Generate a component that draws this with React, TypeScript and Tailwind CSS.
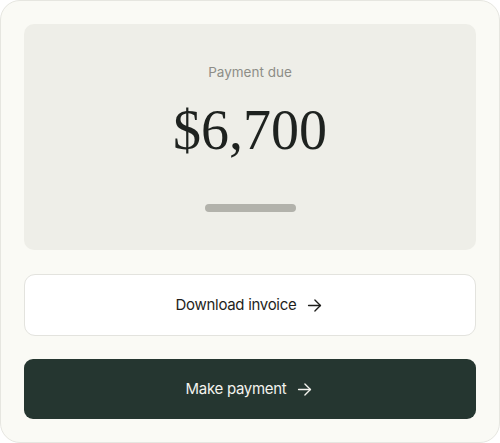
import React from "react";

const Arrow = ({ className }: { className?: string }) => (
  <svg
    viewBox="0 0 24 24"
    width="19"
    height="19"
    fill="none"
    stroke="currentColor"
    strokeWidth={1.7}
    strokeLinecap="round"
    strokeLinejoin="round"
    className={className}
  >
    <path d="M4.5 12h15" />
    <path d="M12.5 5l7 7-7 7" />
  </svg>
);

export default function App() {
  return (
    <div className="w-[500px] h-[443px] bg-white">
      <div className="h-full rounded-[20px] border border-[#e6e6e0] bg-[#fafaf5] p-[23px] flex flex-col gap-6 font-['Inter',sans-serif]">
        {/* Amount panel */}
        <div className="h-[226px] rounded-[10px] bg-[#eeeee8] flex flex-col items-center pt-[38px]">
          <span className="text-[13.5px] text-[#8d8d87] leading-5">Payment due</span>
          <span className="mt-[16px] font-['Liberation_Serif',serif] text-[56px] leading-[64px] text-[#1e221f]">
            $6,700
          </span>
          <div className="mt-[42px] w-[91px] h-[8px] rounded-full bg-[#b2b2ab]" />
        </div>

        {/* Actions */}
        <button className="h-[62px] rounded-[11px] border border-[#e3e3de] bg-white flex items-center justify-center gap-[9px] text-[15px] tracking-[-0.3px] text-[#1f1f1c]">
          <span>Download invoice</span>
          <Arrow />
        </button>
        <button className="h-[60px] -mt-px rounded-[9px] bg-[#253630] flex items-center justify-center gap-[9px] text-[15px] tracking-[-0.3px] text-[#f3f3ee]">
          <span>Make payment</span>
          <Arrow />
        </button>
      </div>
    </div>
  );
}
